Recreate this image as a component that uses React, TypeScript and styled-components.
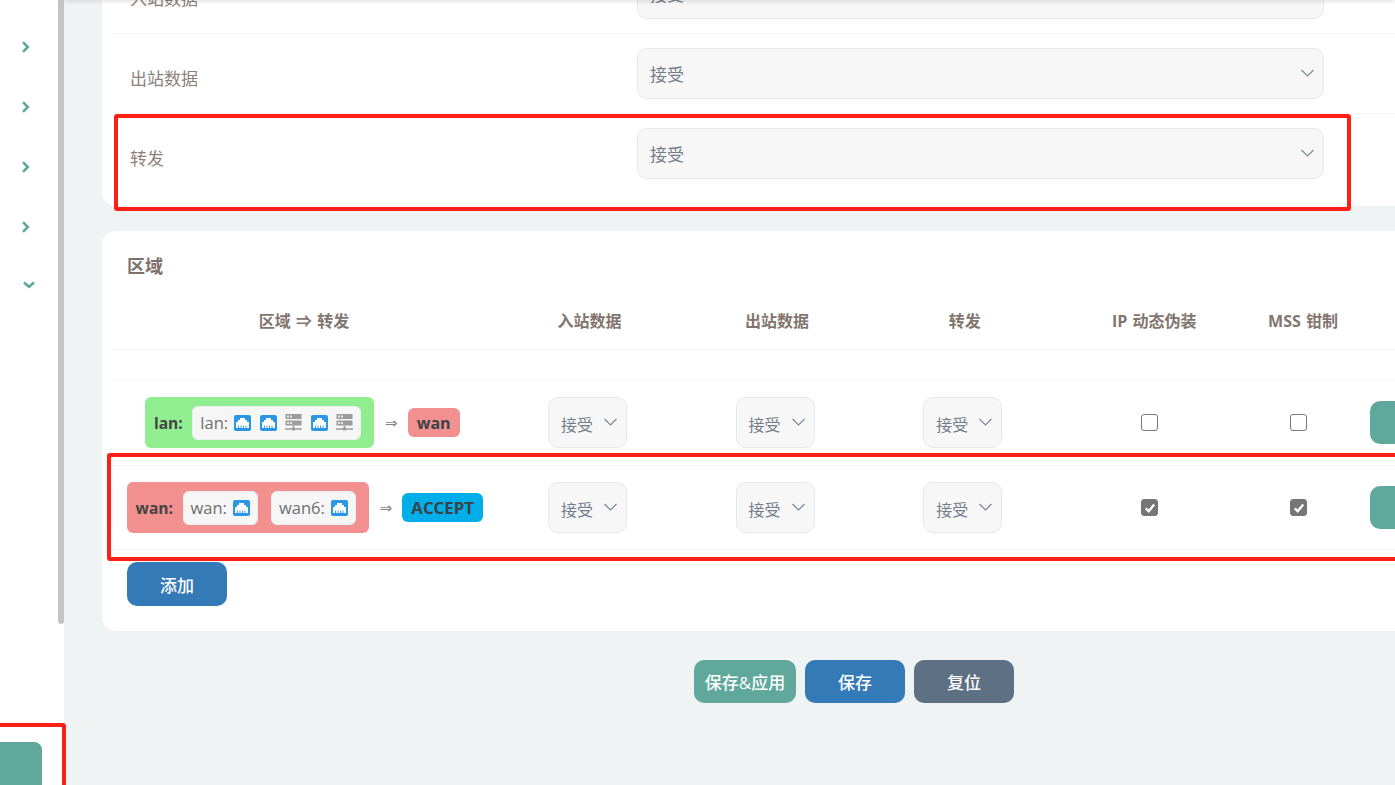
import React from "react";
import styled, { createGlobalStyle } from "styled-components";

const Global = createGlobalStyle`
  html, body { margin: 0; padding: 0; height: 100%; overflow: hidden; background: #f0f3f4; }
  body { font-family: "Open Sans", "Noto Sans CJK SC", sans-serif; }
  * { box-sizing: border-box; }
`;

const Page = styled.div`
  position: relative;
  display: flex;
  width: 1395px;
  height: 785px;
  overflow: hidden;
`;

const Sidebar = styled.aside`
  flex: 0 0 64px;
  height: 785px;
  display: flex;
  background: #fff;
`;

const SideColumn = styled.div`
  flex: 0 0 58px;
  display: flex;
  flex-direction: column;
  padding-top: 17px;
`;

const SideItem = styled.div<{ $open?: boolean }>`
  flex: 0 0 60px;
  display: flex;
  align-items: center;
  padding-left: ${(p) => (p.$open ? "23px" : "21px")};
  color: #5fa89b;
  margin-top: ${(p) => (p.$open ? "-2px" : "0")};
`;

const SideButton = styled.div`
  flex: 0 0 60px;
  width: 42px;
  margin-top: 427px;
  background: #5fa89b;
  border-radius: 0 8px 0 0;
`;

const Thumb = styled.div`
  flex: 0 0 6px;
  height: 624px;
  background: #c4c4c4;
  border-radius: 0 0 3px 3px;
`;

const Main = styled.main`
  position: relative;
  flex: 1;
  min-width: 0;
  padding-left: 38px;
  &::before {
    content: "";
    position: absolute;
    z-index: 2;
    left: 0;
    right: 0;
    top: -6px;
    height: 6px;
    box-shadow: 0 1px 5px rgba(0, 0, 0, 0.14);
  }
`;

const Card = styled.section`
  width: 1400px;
  background: #fff;
  border-radius: 0 0 0 14px;
`;

const TopCard = styled(Card)`
  margin-top: -46px;
  padding: 0 0 12px 10px;
`;

const FormRow = styled.div`
  width: 1390px;
  height: 80px;
  display: flex;
  align-items: center;
  border-bottom: 1px solid #f2f4f5;
  padding-left: 18px;
  &:last-child { border-bottom-color: transparent; }
`;

const FormLabel = styled.label`
  flex: 0 0 507px;
  color: #8d7f7b;
  font-size: 17px;
  padding-top: 8px;
`;

const Select = styled.div<{ $small?: boolean }>`
  position: relative;
  width: ${(p) => (p.$small ? "79px" : "687px")};
  height: 51px;
  background: #f7f7f8;
  border: 1px solid #e4e8ec;
  border-radius: 10px;
  color: #737d8a;
  font-size: ${(p) => (p.$small ? "16px" : "17px")};
  display: flex;
  align-items: center;
  padding: ${(p) => (p.$small ? "3px 0 0 12px" : "0 0 0 12px")};
  & > svg {
    position: absolute;
    right: 9px;
    top: 19px;
  }
`;

const ZoneCard = styled(Card)`
  margin-top: 25px;
  height: 400px;
  border-radius: 14px 0 0 14px;
  padding: 21px 0 0 10px;
`;

const ZoneTitle = styled.h3`
  margin: 0 0 0 15px;
  font-size: 18px;
  line-height: 28px;
  font-weight: 700;
  color: #7e716d;
`;

const TableRow = styled.div<{ $h: number }>`
  display: grid;
  grid-template-columns: 384px 187px 188px 187.5px 191.5px 106px 1fr;
  align-items: center;
  width: 1390px;
  height: ${(p) => p.$h}px;
  border-bottom: 1px solid #f2f4f5;
`;

const RuleRow = styled(TableRow)<{ $pb: number }>`
  padding-bottom: ${(p) => p.$pb}px;
`;

const HeadCell = styled.div`
  text-align: center;
  font-size: 16px;
  font-weight: 700;
  word-spacing: 1px;
  color: #82756f;
  padding-top: 10px;
`;

const Cell = styled.div<{ $pr?: number; $pl?: number }>`
  display: flex;
  justify-content: center;
  align-items: center;
  padding-right: ${(p) => p.$pr ?? 0}px;
  padding-left: ${(p) => p.$pl ?? 0}px;
`;

const ActionCell = styled.div`
  padding-left: 14px;
`;

const EditButton = styled.div`
  width: 60px;
  height: 43px;
  background: #5fa89b;
  border-radius: 10px 0 0 10px;
`;

const Flow = styled.div`
  display: flex;
  align-items: center;
`;

const Zone = styled.div<{ $bg: string }>`
  height: 51px;
  display: flex;
  align-items: center;
  gap: 9.5px;
  padding: 0 13px 0 8.5px;
  border-radius: 6px;
  background: ${(p) => p.$bg};
  font-size: 15.6px;
  font-weight: 700;
  color: #444;
`;

const Ifaces = styled.div`
  display: flex;
  gap: 13px;
`;

const Iface = styled.div`
  height: 34px;
  display: flex;
  align-items: center;
  gap: 6px;
  padding: 0 7px 0 7px;
  background: #f6f6f7;
  border: 1px solid #eceef0;
  border-radius: 6px;
  font-size: 16.5px;
  font-weight: 400;
  color: #6f6f6f;
`;

const Icons = styled.div`
  display: flex;
  align-items: center;
  gap: 8.5px;
`;

const Arrow = styled.span`
  margin: 0 10px 0 11px;
  font-size: 15px;
  color: #8d7f7b;
  font-family: "DejaVu Sans", sans-serif;
`;

const Tag = styled.div<{ $bg: string; $size: number }>`
  height: 29px;
  padding: 0 9px;
  display: flex;
  align-items: center;
  border-radius: 6px;
  background: ${(p) => p.$bg};
  font-size: ${(p) => p.$size}px;
  font-weight: 700;
  color: #3d4247;
`;

const Check = styled.div<{ $on?: boolean }>`
  width: 17px;
  height: 17px;
  border-radius: 3px;
  border: 1px solid #767676;
  background: ${(p) => (p.$on ? "#767676" : "#fff")};
  display: flex;
  align-items: center;
  justify-content: center;
`;

const Button = styled.button<{ $bg: string; $w?: number; $h?: number }>`
  width: ${(p) => p.$w ?? 100}px;
  height: ${(p) => p.$h ?? 43}px;
  padding: 0;
  border: 0;
  border-radius: 10px;
  background: ${(p) => p.$bg};
  color: #fff;
  font: 500 17px "Open Sans", "Noto Sans CJK SC", sans-serif;
`;

const AddRow = styled.div`
  margin: 12px 0 0 15px;
`;

const Actions = styled.div`
  display: flex;
  gap: 9px;
  margin: 29px 0 0 592px;
`;

const Mark = styled.div<{ $l: number; $t: number; $w: number; $h: number }>`
  position: absolute;
  z-index: 5;
  left: ${(p) => p.$l}px;
  top: ${(p) => p.$t}px;
  width: ${(p) => p.$w}px;
  height: ${(p) => p.$h}px;
  border: 4px solid #ff2015;
  border-radius: 3px;
  pointer-events: none;
`;

const Right = () => (
  <svg width="10" height="14" viewBox="0 0 10 14" fill="none">
    <path d="M2 2.2 6.8 7 2 11.8" stroke="currentColor" strokeWidth="2.6" />
  </svg>
);

const Down = () => (
  <svg width="12" height="10" viewBox="0 0 12 10" fill="none">
    <path d="M1 2.4 6 6.8 11 2.4" stroke="currentColor" strokeWidth="2.6" />
  </svg>
);

const Caret = () => (
  <svg width="13" height="10" viewBox="0 0 13 10" fill="none">
    <path d="M0.5 2 6.5 8 12.5 2" stroke="#7d8796" strokeWidth="1.2" />
  </svg>
);

const Port = () => (
  <svg width="17" height="16" viewBox="0 0 17 16">
    <rect width="17" height="16" rx="2" fill="#2b96e6" />
    <path d="M6 3h5v2h2v2h2v6H2V7h2V5h2z" fill="#fff" />
    <path d="M4.5 10.5v2.5M7 10.5v2.5M9.5 10.5v2.5M12 10.5v2.5" stroke="#2b96e6" strokeWidth="0.9" />
  </svg>
);

const Server = () => (
  <svg width="17" height="17" viewBox="0 0 17 17">
    <rect x="0.5" width="16" height="5" fill="#9c9c9c" />
    <rect x="0.5" y="6.5" width="16" height="5" fill="#9c9c9c" />
    <rect x="2" y="1.5" width="2" height="2" fill="#e8e8e8" />
    <rect x="5" y="1.5" width="2" height="2" fill="#e8e8e8" />
    <rect x="2" y="8" width="2" height="2" fill="#e8e8e8" />
    <rect x="5" y="8" width="2" height="2" fill="#e8e8e8" />
    <path d="M8.5 11.5v3M0 15h17" stroke="#9c9c9c" strokeWidth="1.4" />
    <rect x="7" y="13.5" width="3" height="3" fill="#9c9c9c" />
  </svg>
);

const Tick = () => (
  <svg width="12" height="12" viewBox="0 0 12 12" fill="none">
    <path d="M1.8 6.4 4.7 9.2 10.2 2.6" stroke="#fff" strokeWidth="2.3" />
  </svg>
);

const Policy = () => (
  <Cell $pr={4}>
    <Select $small>
      接受
      <Caret />
    </Select>
  </Cell>
);

const rules = [
  {
    zone: "lan:",
    bg: "#90ee90",
    ifaces: [{ name: "lan:", icons: ["p", "p", "s", "p", "s"] }],
    dest: "wan",
    destBg: "#f29090",
    destSize: 16,
    on: false,
    h: 85,
    pb: 1,
    pr: 3,
    pl: 0,
  },
  {
    zone: "wan:",
    bg: "#f29090",
    ifaces: [
      { name: "wan:", icons: ["p"] },
      { name: "wan6:", icons: ["p"] },
    ],
    dest: "ACCEPT",
    destBg: "#00aeea",
    destSize: 16.8,
    on: true,
    h: 84,
    pb: 0,
    pr: 0,
    pl: 2,
  },
];

const heads = ["区域 ⇒ 转发", "入站数据", "出站数据", "转发", "IP 动态伪装", "MSS 钳制"];
const forms = ["入站数据", "出站数据", "转发"];

export default function App() {
  return (
    <Page>
      <Global />
      <Sidebar>
        <SideColumn>
          {[0, 1, 2, 3].map((i) => (
            <SideItem key={i}>
              <Right />
            </SideItem>
          ))}
          <SideItem $open>
            <Down />
          </SideItem>
          <SideButton />
        </SideColumn>
        <Thumb />
      </Sidebar>
      <Main>
        <TopCard>
          {forms.map((f) => (
            <FormRow key={f}>
              <FormLabel>{f}</FormLabel>
              <Select>
                接受
                <Caret />
              </Select>
            </FormRow>
          ))}
        </TopCard>
        <ZoneCard>
          <ZoneTitle>区域</ZoneTitle>
          <TableRow $h={70}>
            {heads.map((h) => (
              <HeadCell key={h}>{h}</HeadCell>
            ))}
          </TableRow>
          <TableRow $h={31} />
          {rules.map((r) => (
            <RuleRow key={r.zone} $h={r.h} $pb={r.pb}>
              <Cell $pr={r.pr} $pl={r.pl}>
                <Flow>
                  <Zone $bg={r.bg}>
                    {r.zone}
                    <Ifaces>
                      {r.ifaces.map((n) => (
                        <Iface key={n.name}>
                          {n.name}
                          <Icons>
                            {n.icons.map((k, i) => (k === "p" ? <Port key={i} /> : <Server key={i} />))}
                          </Icons>
                        </Iface>
                      ))}
                    </Ifaces>
                  </Zone>
                  <Arrow>⇒</Arrow>
                  <Tag $bg={r.destBg} $size={r.destSize}>{r.dest}</Tag>
                </Flow>
              </Cell>
              <Policy />
              <Policy />
              <Policy />
              <Cell $pr={9}>
                <Check $on={r.on}>{r.on && <Tick />}</Check>
              </Cell>
              <Cell $pr={9}>
                <Check $on={r.on}>{r.on && <Tick />}</Check>
              </Cell>
              <ActionCell>
                <EditButton />
              </ActionCell>
            </RuleRow>
          ))}
          <AddRow>
            <Button $bg="#337ab7" $h={44}>添加</Button>
          </AddRow>
        </ZoneCard>
        <Actions>
          <Button $bg="#5fa89b" $w={102}>保存&amp;应用</Button>
          <Button $bg="#337ab7">保存</Button>
          <Button $bg="#5e7084">复位</Button>
        </Actions>
      </Main>
      <Mark $l={114} $t={114} $w={1237} $h={97} />
      <Mark $l={107} $t={453} $w={1300} $h={108} />
      <Mark $l={-10} $t={723} $w={76} $h={80} />
    </Page>
  );
}
